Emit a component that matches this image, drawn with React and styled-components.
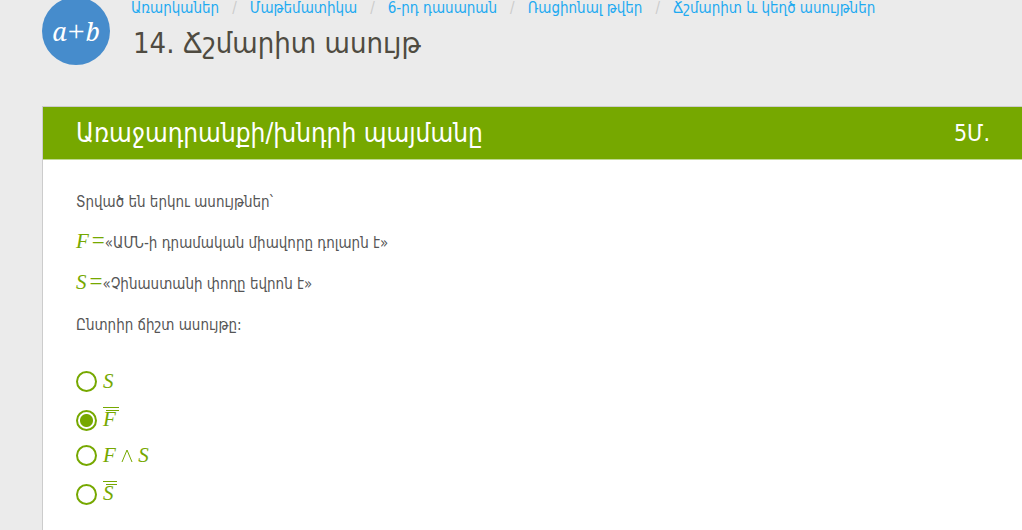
import React, { useState } from 'react'
import styled, { createGlobalStyle } from 'styled-components'

const GlobalStyle = createGlobalStyle`
  * {
    box-sizing: border-box;
  }

  body {
    margin: 0;
    background: #ebebeb;
    color: #555;
    font-family: 'DejaVu Sans Condensed', 'DejaVu Sans', sans-serif;
    font-size: 15px;
    overflow: hidden;
  }
`

const crumbs = [
  'Առարկաներ',
  'Մաթեմատիկա',
  '6-րդ դասարան',
  'Ռացիոնալ թվեր',
  'Ճշմարիտ և կեղծ ասույթներ'
]

const Overlined = ({ children }) => (
  <OuterBar>
    <InnerBar>{children}</InnerBar>
  </OuterBar>
)

const answers = [
  { id: 's', content: 'S' },
  { id: 'not_not_f', content: <Overlined>F</Overlined>, tall: true },
  { id: 'f_and_s', content: <>F <Wedge /> S</>, label: 'F ∧ S' },
  { id: 'not_not_s', content: <Overlined>S</Overlined>, tall: true }
]

function Wedge() {
  return (
    <WedgeIcon width="12" height="14" viewBox="0 0 12 14" aria-hidden="true">
      <path d="M1 13 6 1l5 12" fill="none" stroke="currentColor" strokeWidth="1" />
    </WedgeIcon>
  )
}

const App = () => {
  const [selected, setSelected] = useState('not_not_f')

  return (
    <Page>
      <GlobalStyle />
      <Header>
        <Logo>a<Plus>+</Plus>b</Logo>
        <HeaderText>
          <Breadcrumbs>
            {crumbs.map(crumb => (
              <Crumb key={crumb}>
                <CrumbLink href="#">{crumb}</CrumbLink>
              </Crumb>
            ))}
          </Breadcrumbs>
          <Title>14. Ճշմարիտ ասույթ</Title>
        </HeaderText>
      </Header>
      <Card>
        <CardHeader>
          <CardTitle>Առաջադրանքի/խնդրի պայմանը</CardTitle>
          <Points>5Մ.</Points>
        </CardHeader>
        <CardBody>
          <Text>Տրված են երկու ասույթներ՝</Text>
          <Text><MathText>F<Equals>=</Equals></MathText>«ԱՄՆ-ի դրամական միավորը դոլարն է»</Text>
          <Text><MathText>S<Equals>=</Equals></MathText>«Չինաստանի փողը եվրոն է»</Text>
          <Text>Ընտրիր ճիշտ ասույթը:</Text>
          <Answers>
            {answers.map(({ id, content, label, tall }) => (
              <Answer key={id} $tall={tall}>
                <Radio
                  type="radio"
                  name="answer"
                  aria-label={label}
                  checked={selected === id}
                  onChange={() => setSelected(id)}
                />
                <MathText>{content}</MathText>
              </Answer>
            ))}
          </Answers>
        </CardBody>
      </Card>
    </Page>
  )
}

const Page = styled.main`
  padding-left: 42px;
`

const Header = styled.header`
  display: flex;
  gap: 21px;
  height: 106px;
`

const Logo = styled.div`
  display: flex;
  flex: none;
  align-items: center;
  justify-content: center;
  width: 68px;
  height: 68px;
  margin-top: -3px;
  border-radius: 50%;
  background: #468ccc;
  color: #fff;
  font: italic 25px 'Noto Serif', 'DejaVu Serif Condensed', 'DejaVu Serif', serif;
`

const Plus = styled.span`
  padding: 0 1px;
  font: 30px/30px 'Liberation Serif', serif;
`

const HeaderText = styled.div`
  flex: 1;
`

const Breadcrumbs = styled.nav`
  display: flex;
  line-height: 16px;
  white-space: nowrap;
`

const Crumb = styled.span`
  & + &::before {
    content: '/';
    padding: 0 13px;
    color: #ccc;
  }
`

const CrumbLink = styled.a`
  color: #1eaaf1;
  text-decoration: none;
`

const Title = styled.h1`
  margin: 9px 0 0;
  padding-left: 2px;
  color: #4f4b41;
  font-size: 29px;
  font-weight: normal;
  line-height: 36px;
`

const Card = styled.section`
  min-height: calc(100vh - 106px);
  border: 1px solid #ccc;
  border-width: 1px 0 0 1px;
  background: #fff;
`

const CardHeader = styled.header`
  display: flex;
  align-items: center;
  justify-content: space-between;
  height: 53px;
  padding: 0 32px 0 33px;
  border-bottom: 1px solid #c0d993;
  background: #76a800;
  color: #fff;
`

const CardTitle = styled.h2`
  margin: 0;
  font-size: 26px;
  font-weight: normal;
  line-height: 32px;
`

const Points = styled.span`
  font-size: 23px;
  line-height: 32px;
`

const CardBody = styled.div`
  padding: 32px 33px 0;
`

const Text = styled.p`
  margin: 0 0 20px;
  line-height: 21px;
`

const MathText = styled.span`
  color: #76a800;
  font: italic 21px/16px 'Liberation Serif', serif;
`

const Equals = styled.span`
  padding-left: 3px;
  font-size: 23px;
  font-style: normal;
  line-height: 1px;
`

const Answers = styled.div`
  padding-top: 14px;
`

const Answer = styled.label`
  display: flex;
  align-items: ${({ $tall }) => ($tall ? 'flex-end' : 'center')};
  gap: 6px;
  width: fit-content;
  height: ${({ $tall }) => ($tall ? '26px' : '22px')};
  margin-bottom: 13px;
`

const Radio = styled.input`
  appearance: none;
  flex: none;
  width: 21px;
  height: 21px;
  margin: 0;
  border: 2px solid #76a800;
  border-radius: 50%;
  background: #fff;

  &:checked {
    background: radial-gradient(circle, #76a800 6px, #fff 7px);
  }
`

const OuterBar = styled.span`
  display: inline-block;
  padding: 2px 0 4px;
  border-top: 1px solid;
`

const InnerBar = styled.span`
  display: block;
  margin-left: 3px;
  padding-right: 3px;
  border-top: 1px solid;
  text-indent: -3px;
`

const WedgeIcon = styled.svg`
  vertical-align: -1px;
`

export default App
